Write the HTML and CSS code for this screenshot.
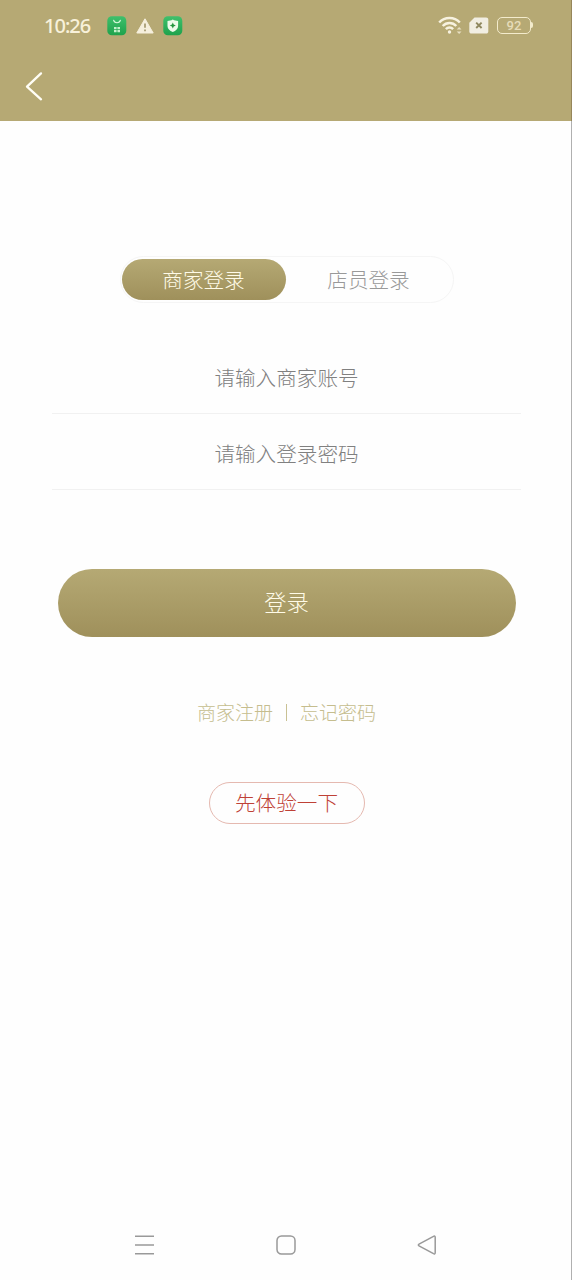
FILE: index.html
```html
<!DOCTYPE html>
<html lang="zh-CN">
<head>
<meta charset="utf-8">
<title>商家登录</title>
<link rel="stylesheet" href="styles.css">
</head>
<body>
<div class="screen">
  <header class="header">
    <div class="status">
      <span class="clock">10:26</span>
      <svg class="app-icon" width="20" height="20" viewBox="0 0 20 20">
        <defs><linearGradient id="green" x1="0" y1="0" x2="0" y2="1"><stop offset="0" stop-color="#3fc06c"/><stop offset="1" stop-color="#1ea24c"/></linearGradient></defs>
        <rect x=".3" y=".3" width="19" height="19" rx="4.5" fill="url(#green)"/>
        <path d="M6.6 4.2c.7 3.400 6.1 3.400 6.800 0" fill="none" stroke="#d8f8dc" stroke-width="1.1" stroke-linecap="round"/>
        <path d="M7 11h2.6v2.3H7zM10.4 11H13v2.3h-2.6zM7 14h2.6v2.3H7zM10.4 14H13v2.3h-2.6z" fill="#c4f1cb"/>
      </svg>
      <svg class="warn-icon" width="18" height="16" viewBox="0 0 18 16">
        <path d="M9 .8 17.2 15H.8z" fill="#f5efdc" stroke="#f5efdc" stroke-width="1" stroke-linejoin="round"/>
        <path d="M9 5.4v4.4M9 11.5v1.7" stroke="#9f9368" stroke-width="1.6"/>
      </svg>
      <svg class="app-icon" width="20" height="20" viewBox="0 0 20 20">
        <rect x=".3" y=".3" width="19" height="19" rx="4.5" fill="url(#green)"/>
        <path d="M9.800 3.600c1.800 1.100 3.400 1.300 5.300 1.400v4.900c0 2.800-2.100 4.700-5.300 6.200-3.200-1.500-5.300-3.400-5.300-6.200V5c1.900-.1 3.500-.3 5.300-1.400z" fill="#edfbea"/>
        <path d="m9.800 6.500.9 2.100 2.100.9-2.100.9-.9 2.100-.9-2.100-2.100-.9 2.100-.9z" fill="#25963f"/>
      </svg>
      <span class="spacer"></span>
      <svg class="wifi-icon" width="24" height="19" viewBox="0 0 24 19">
        <g fill="none" stroke="#f7f2e0" stroke-width="2.500"><path d="M1.200 6.500C6.700.5 16.300.5 21.800 6.500"/><path d="M4.700 10c3.800-4 9.800-4 13.600 0"/><path d="M7.900 13.200c2-2.200 5.200-2.200 7.200 0"/></g>
        <circle cx="11.500" cy="16" r="1.700" fill="#f7f2e0"/>
        <path d="m18.700 13.600 2.400-2.500 2.400 2.500zM18.700 15.400l2.400 2.500 2.400-2.500z" fill="#e7dfc1"/>
      </svg>
      <svg class="sim-icon" width="20" height="17" viewBox="0 0 20 17">
        <path d="M5.500.5h11.700c1.200 0 2.100.9 2.100 2.100v11.800c0 1.200-.9 2.100-2.100 2.100H2.400C1.200 16.500.3 15.600.3 14.400V5.700z" fill="#f1eee2"/>
        <path d="m7.200 5.600 5.400 5.400M12.600 5.600 7.200 11" stroke="#8f885f" stroke-width="1.900"/>
      </svg>
      <span class="battery">92</span>
    </div>
    <svg class="back" width="20" height="30" viewBox="0 0 20 30"><path d="M17 2.400 3 15.700 17 28.300" fill="none" stroke="#fffef6" stroke-width="2.300" stroke-linecap="round" stroke-linejoin="round"/></svg>
  </header>
  <main class="content">
    <nav class="tabs"><span class="tab active">商家登录</span><span class="tab">店员登录</span></nav>
    <form class="fields">
      <div class="field">请输入商家账号</div>
      <div class="field">请输入登录密码</div>
    </form>
    <div class="submit">登录</div>
    <div class="links"><span>商家注册</span><i class="divider"></i><span>忘记密码</span></div>
    <div class="trial">先体验一下</div>
  </main>
  <footer class="navbar">
    <svg width="20" height="20" viewBox="0 0 20 20"><path d="M0 1.300h19M0 10.100h19M0 18.800h19"/></svg>
    <svg width="20" height="20" viewBox="0 0 20 20"><rect x="1" y="1" width="18" height="18" rx="4.500"/></svg>
    <svg width="20" height="20" viewBox="0 0 20 20"><path d="M16.500 1.300 2 9.100c-.9.500-.9 1.300 0 1.800l14.500 7.800c1 .5 1.700.2 1.700-.9V2.200c0-1.100-.7-1.400-1.700-.9z"/></svg>
  </footer>
</div>
</body>
</html>
```
FILE: styles.css
```css
* { box-sizing: border-box; }
body { margin: 0; font-family: "Noto Sans CJK SC", sans-serif; font-weight: 300; background: #fefefe; }
.screen { width: 572px; height: 1280px; display: flex; flex-direction: column; border-right: 1px solid #b0b0b0; background: #fefefe; }
.header { height: 121px; flex: none; margin-right: -1px; background: #b6a974; border-right: 1px solid #96865a; }
.status { height: 51px; display: flex; align-items: center; padding: 0 40px 0 44px; }
.clock { width: 63px; font: 500 20px/24px "Noto Sans", sans-serif; letter-spacing: -1px; color: #f8f1da; }
.warn-icon { margin: 0 9px; }
.spacer { flex: 1; }
.wifi-icon { margin-right: 7px; }
.sim-icon { margin-right: 8px; }
.battery { position: relative; width: 34px; height: 17px; border: 1.500px solid #f3ebcc; border-radius: 5px; font: 500 13px/15px Roboto, sans-serif; text-align: center; color: #e6dcb9; }
.battery::after { content: ""; position: absolute; right: -3px; top: 4px; width: 2px; height: 6px; border-radius: 0 2px 2px 0; background: #f3ebcc; }
.back { display: block; margin: 20px 0 0 24px; }
.content { flex: 1; display: flex; flex-direction: column; align-items: center; padding-left: 2px; }
.tabs { display: flex; width: 334px; height: 47px; margin-top: 135px; padding: 2px 1px; border: 1px solid #f5f5f5; border-radius: 24px; }
.tab { flex: 1; height: 41px; line-height: 40px; border-radius: 21px; text-align: center; font-size: 20.600px; color: #999; }
.tab.active { flex: 0 0 164px; color: #fffbe8; background: linear-gradient(#b5a974, #9f905b); }
.fields { width: 469px; margin-top: 35px; }
.field { height: 76px; padding-top: 21px; line-height: 36px; border-bottom: 1px solid #f1f1f1; text-align: center; font-size: 20.600px; color: #808080; }
.submit { width: 458px; height: 68px; margin-top: 79px; border-radius: 34px; line-height: 65px; text-align: center; font-size: 22.300px; color: #fffbe8; background: linear-gradient(#b5a974, #9f905b); }
.links { display: flex; align-items: center; height: 28px; margin-top: 61px; font-size: 19px; color: #c5bd8e; }
.links span { line-height: 28px; }
.divider { width: 1px; height: 17px; margin: 0 13px; background: #c9c194; }
.trial { width: 156px; height: 42px; margin-top: 56px; border: 1px solid #e5b9b0; border-radius: 21px; line-height: 39px; text-align: center; font-size: 20.600px; color: #bf4136; }
.navbar { display: flex; justify-content: space-between; height: 45px; padding: 0 134px 0 135px; fill: none; stroke: #999; stroke-width: 1.500; }
```
